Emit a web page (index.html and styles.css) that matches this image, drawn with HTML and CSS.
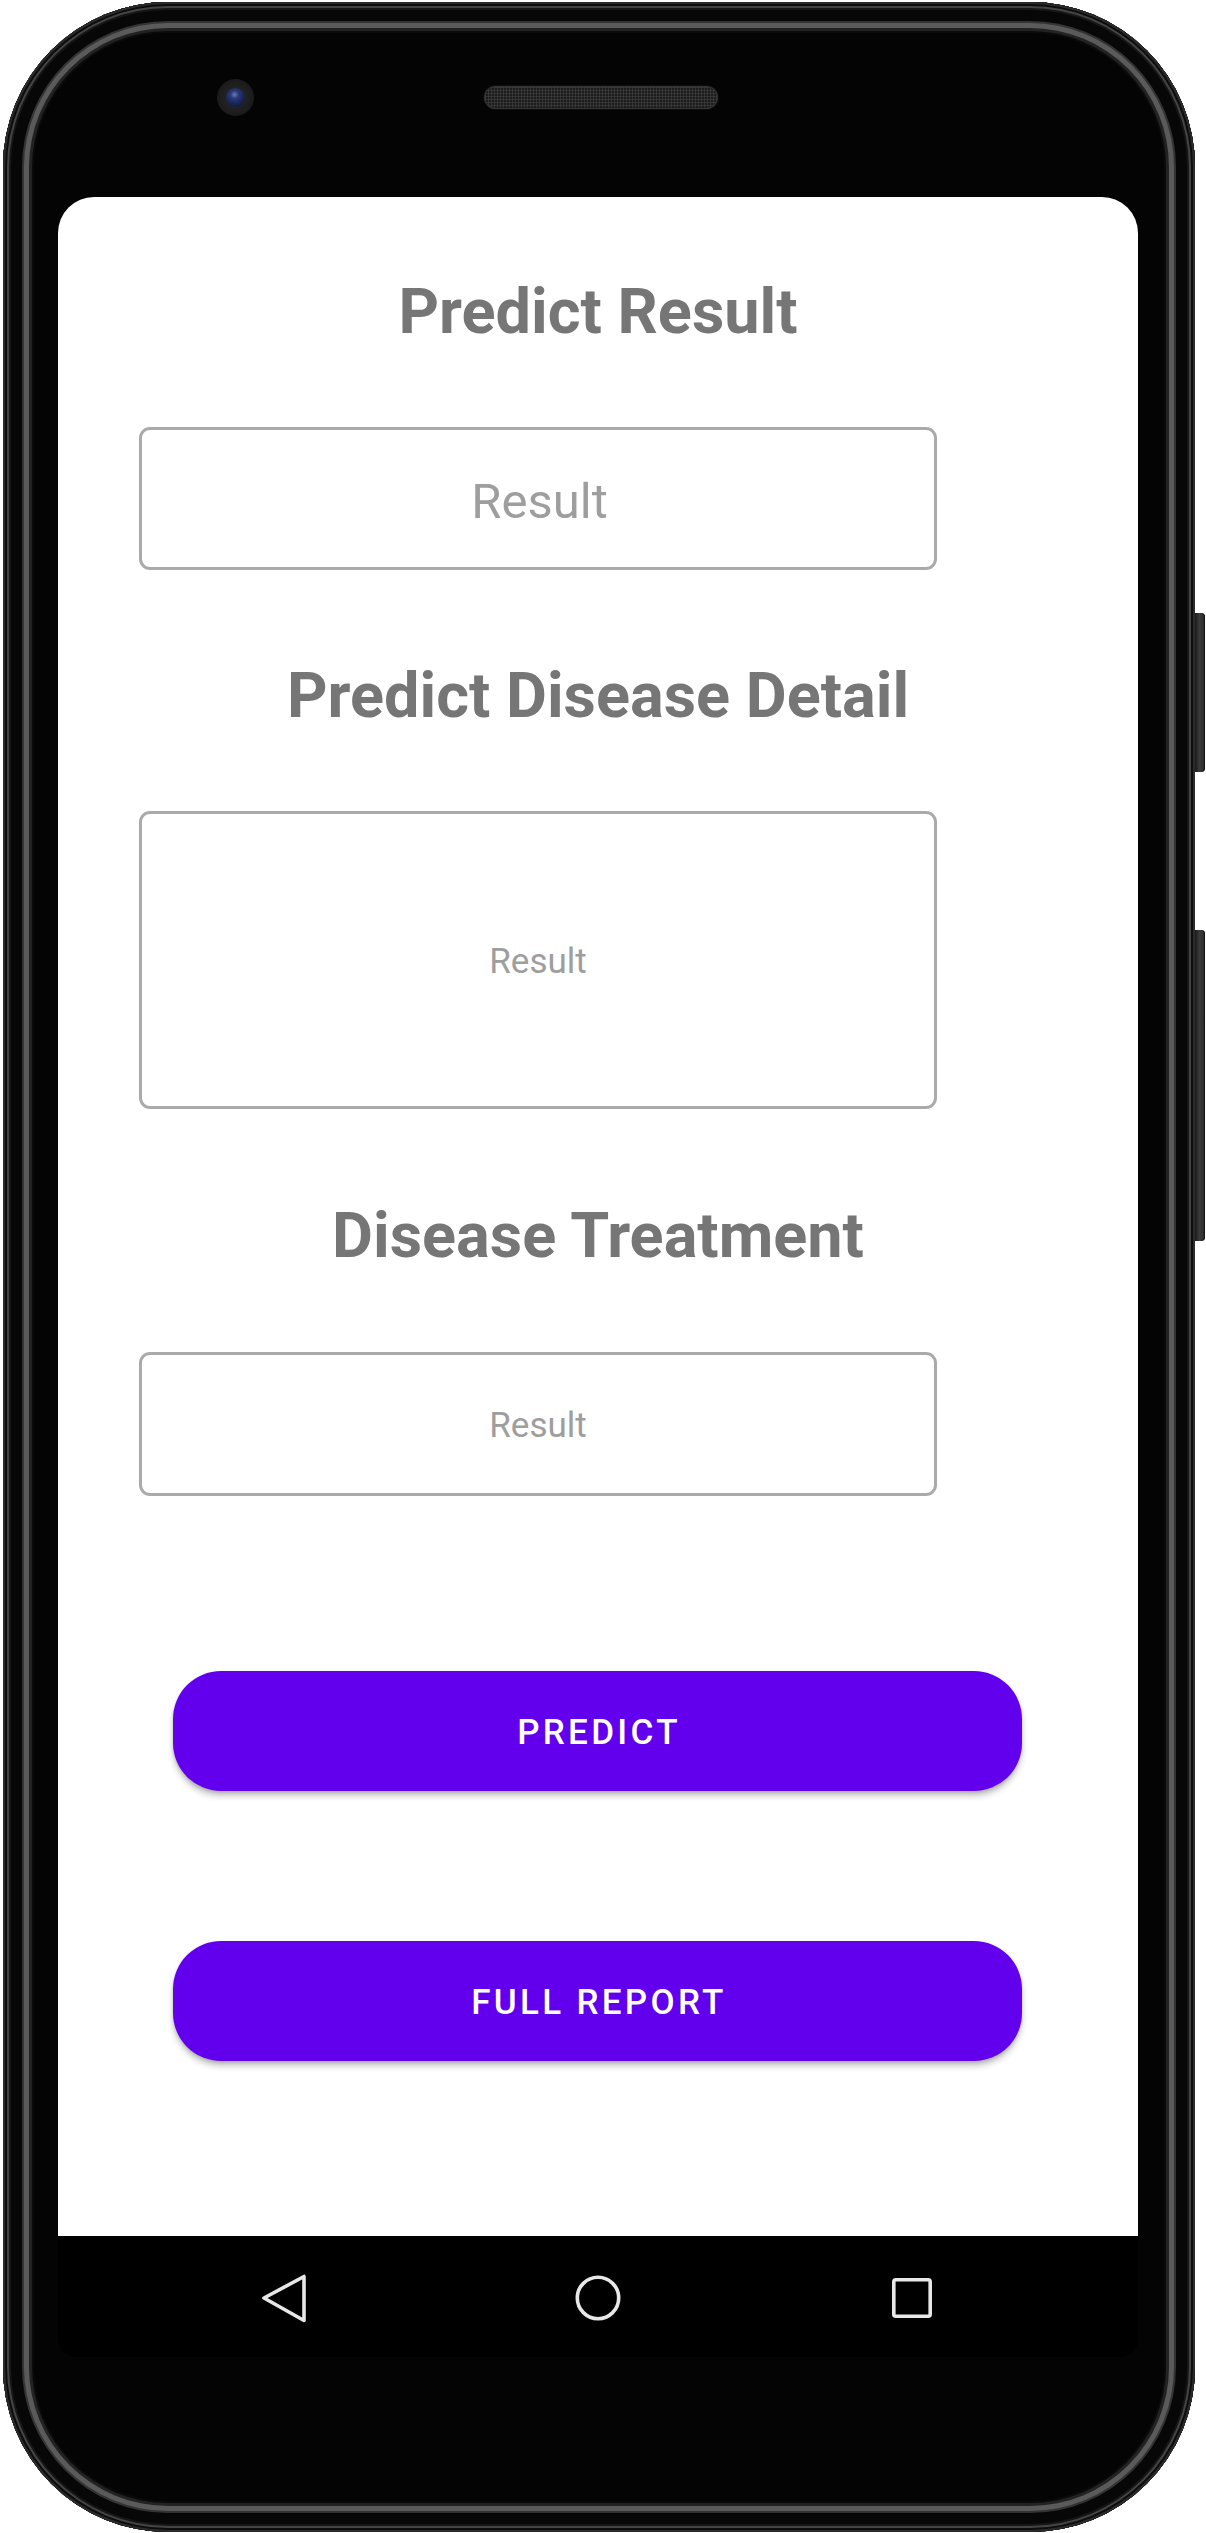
FILE: index.html
```html
<!DOCTYPE html>
<html lang="en">
<head>
<meta charset="utf-8">
<title>Predict</title>
<link rel="stylesheet" href="styles.css">
</head>
<body>
<div class="phone">
  <span class="side-btn side-btn-power"></span>
  <span class="side-btn side-btn-volume"></span>
  <div class="top-bezel">
    <div class="camera"><span class="lens"></span></div>
    <div class="speaker"></div>
  </div>
  <div class="display">
    <main class="app">
      <h2 class="title">Predict Result</h2>
      <div class="result-box box-short box-first"><span class="result-text large">Result</span></div>
      <h2 class="title">Predict Disease Detail</h2>
      <div class="result-box box-tall"><span class="result-text small">Result</span></div>
      <h2 class="title">Disease Treatment</h2>
      <div class="result-box box-last"><span class="result-text small">Result</span></div>
      <button class="action-btn btn-predict">PREDICT</button>
      <button class="action-btn btn-report">FULL REPORT</button>
    </main>
    <nav class="navbar">
      <svg class="nav-icon" width="46" height="50" viewBox="0 0 46 50"><path d="M3 25 L43 3.5 L43 47.5 Z" fill="none" stroke="#e8e8e8" stroke-width="3.6" stroke-linejoin="round"/></svg>
      <svg class="nav-icon" width="46" height="50" viewBox="0 0 46 50"><circle cx="23" cy="25" r="20.7" fill="none" stroke="#e8e8e8" stroke-width="3.6"/></svg>
      <svg class="nav-icon" width="46" height="50" viewBox="0 0 46 50"><rect x="4.8" y="6.8" width="36.4" height="36.4" rx="2" fill="none" stroke="#e8e8e8" stroke-width="3.6"/></svg>
    </nav>
  </div>
</div>
</body>
</html>
```
FILE: styles.css
```css
html, body {
  margin: 0;
  padding: 0;
  background: #ffffff;
}

body {
  width: 1206px;
  height: 2533px;
  overflow: hidden;
  font-family: Roboto, "Liberation Sans", Arial, sans-serif;
}

.phone {
  position: relative;
  box-sizing: border-box;
  margin: 2px 0 0 3px;
  width: 1192px;
  height: 2530px;
  border-radius: 165px;
  background: #040404;
  box-shadow:
    inset 0 0 0 2px #2b2b2b,
    inset 0 0 0 4px #0d0d0d,
    inset 0 0 0 6px #444444,
    inset 0 0 0 8px #161616,
    inset 0 0 0 19px #070707,
    inset 0 0 0 21px #333333,
    inset 0 0 0 26px #5a5a5a,
    inset 0 0 0 29px #222222,
    inset 0 0 0 31px #0a0a0a;
  display: flex;
  flex-direction: column;
}

.side-btn {
  position: absolute;
  right: -10px;
  width: 10px;
  border-radius: 0 4px 4px 0;
  background: linear-gradient(90deg, #1a1a1a 0%, #3a3a3a 45%, #2a2a2a 100%);
  box-shadow: inset -1px 0 0 #111;
}

.side-btn-power {
  top: 611px;
  height: 159px;
}

.side-btn-volume {
  top: 928px;
  height: 311px;
}

.top-bezel {
  height: 195px;
  box-sizing: border-box;
  padding: 0 0 5px 214px;
  display: flex;
  align-items: center;
}

.camera {
  width: 37px;
  height: 37px;
  border-radius: 50%;
  background: radial-gradient(circle, #2a2a2a 0%, #1d1d1d 60%, #111 100%);
  display: flex;
  align-items: center;
  justify-content: center;
}

.lens {
  width: 19px;
  height: 19px;
  border-radius: 50%;
  background: radial-gradient(circle at 45% 35%, #6a7ab8 0%, #2a3a78 25%, #15204d 65%, #0b1030 100%);
}

.speaker {
  margin-left: 230px;
  width: 234px;
  height: 23px;
  border-radius: 12px;
  background-color: #1c1c1c;
  background-image: radial-gradient(#3e3e3e 0.9px, transparent 1.2px);
  background-size: 3px 3px;
  box-shadow: inset 0 0 0 1px #333333, 0 0 0 1px #0e0e0e;
}

.display {
  margin-left: 55px;
  width: 1080px;
  display: flex;
  flex-direction: column;
}

.app {
  height: 2039px;
  box-sizing: border-box;
  background: #ffffff;
  border-radius: 36px 36px 0 0;
  padding-top: 77px;
  display: flex;
  flex-direction: column;
}

.title {
  margin: 0;
  font-size: 63px;
  line-height: 76px;
  font-weight: 700;
  color: #767676;
  text-align: center;
}

.result-box {
  box-sizing: border-box;
  margin: 77px 0 89px 81px;
  width: 798px;
  border: 3px solid #aaaaaa;
  border-radius: 11px;
  display: flex;
  align-items: center;
  justify-content: center;
}

.box-first {
  margin-bottom: 88px;
}

.box-short {
  height: 143px;
}

.box-tall {
  height: 298px;
}

.box-last {
  height: 144px;
  margin-top: 78px;
  margin-bottom: 0;
}

.result-text {
  color: #9e9e9e;
  font-weight: 400;
  padding: 3px 0 0 0;
}

.result-text.large {
  font-size: 49px;
  padding-top: 5px;
  padding-left: 3px;
}

.result-text.small {
  font-size: 35px;
}

.action-btn {
  margin: 0 0 0 115px;
  width: 849px;
  height: 120px;
  border: none;
  border-radius: 48px;
  background: #6200ee;
  color: #ffffff;
  font-family: Roboto, "Liberation Sans", Arial, sans-serif;
  font-size: 35px;
  font-weight: 500;
  letter-spacing: 3.3px;
  box-shadow: 0 5px 6px rgba(0, 0, 0, 0.22), 0 2px 3px rgba(0, 0, 0, 0.12);
  padding: 2px 0 0 3px;
}

.btn-predict {
  margin-top: 175px;
}

.btn-report {
  margin-top: 150px;
}

.navbar {
  height: 121px;
  box-sizing: border-box;
  padding-top: 3px;
  background: #000000;
  border-radius: 0 0 18px 18px;
  display: flex;
  align-items: center;
  justify-content: center;
  gap: 268px;
}

.nav-icon {
  display: block;
}
```
